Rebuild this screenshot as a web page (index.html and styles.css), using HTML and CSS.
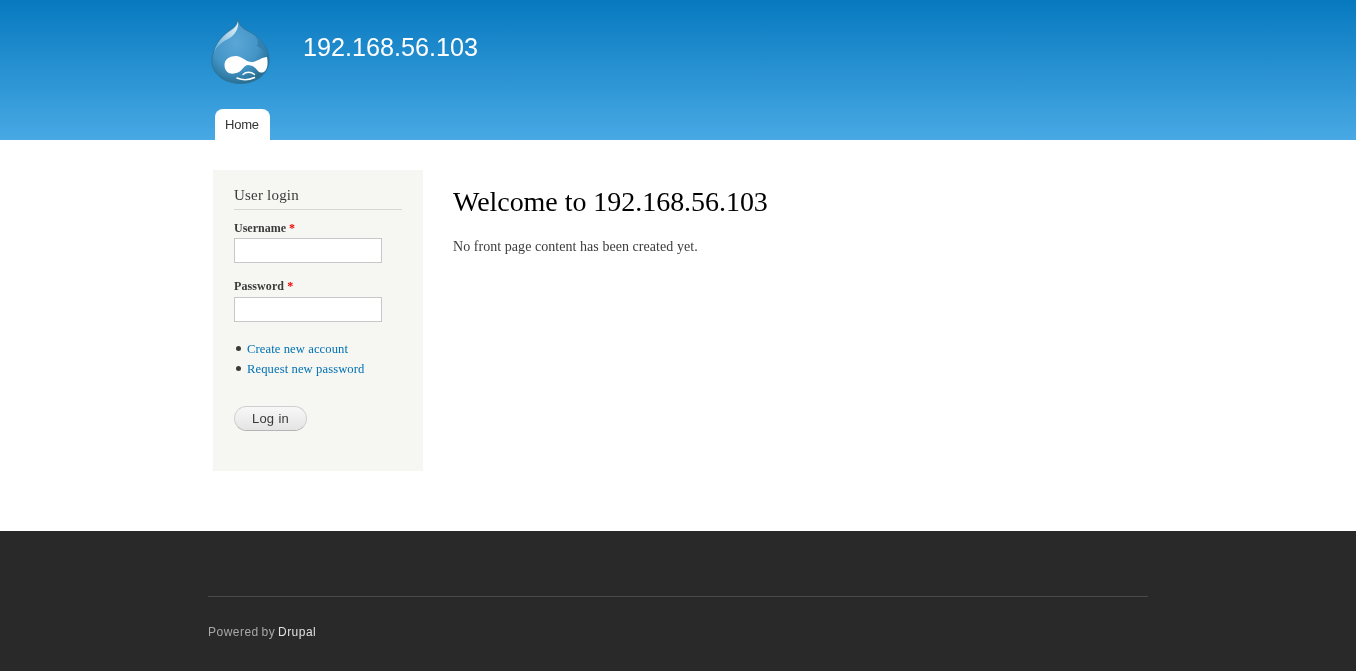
FILE: index.html
```html
<!DOCTYPE html>
<html lang="en">
<head>
<meta charset="utf-8">
<title>Welcome to 192.168.56.103</title>
<link rel="stylesheet" href="styles.css">
</head>
<body>
<header class="header">
  <div class="wrap header-top">
    <a class="logo" href="#" aria-label="Home">
      <svg width="62" height="68" viewBox="0 0 62 68">
        <defs>
          <radialGradient id="drop" cx="42%" cy="38%" r="62%">
            <stop offset="0" stop-color="#5ba7d6"/>
            <stop offset="0.65" stop-color="#4394c6"/>
            <stop offset="0.9" stop-color="#2f7ca6"/>
            <stop offset="1" stop-color="#2a6f8f"/>
          </radialGradient>
          <linearGradient id="shine" x1="1" y1="0" x2="0" y2="1">
            <stop offset="0" stop-color="#eef6fb"/>
            <stop offset="0.5" stop-color="#a9d0e8"/>
            <stop offset="1" stop-color="#5ba7d6"/>
          </linearGradient>
        </defs>
        <path d="M30 1C31 7 34 10 39 12.5C51 18 61 29 61 42C61 56 48 65.5 33 65.5C16 65.5 4 56 4 43C4 30 12 19 21 12.5C26 9 29 7 30 1Z" fill="url(#drop)" stroke="#2d7196" stroke-width="0.8"/>
        <path d="M30 3C29.5 7 27 10 21.5 13.5C14 18.5 8 26 6 34C10 27 15 23.5 20 21C27 17 31 11 30 3Z" fill="url(#shine)"/>
        <path d="M47 18.5C54 23 58.5 31 59.5 38C57 33.5 53.5 30 49 28C51 25 50 21.5 47 18.5Z" fill="#3280ae"/>
        <path d="M16.5 47C16.5 41 22 38 28 38C34 38 39 45 45 44C50 43 54 39 59 39C60 44 60 50 57 53C55 55 52 55 50 53C47 49 44 47 40 47C36 47 34 53 30 54.5C26 56 22 56 20 54.5C17.5 53 16.5 50 16.5 47Z" fill="#fff"/>
        <path d="M35 56.5C38 53.5 43 53.5 46.5 56.5" fill="none" stroke="#fff" stroke-width="1.3" stroke-linecap="round"/>
        <path d="M29 60C34 62 41 62 46.5 59.5" fill="none" stroke="#fff" stroke-width="1.5" stroke-linecap="round"/>
      </svg>
    </a>
    <a class="site-name" href="#">192.168.56.103</a>
  </div>
  <nav class="wrap tabs">
    <a class="tab" href="#">Home</a>
  </nav>
</header>

<div class="wrap main">
  <aside class="sidebar">
    <h2 class="block-title">User login</h2>
    <form class="login">
      <label class="field">
        <span class="label">Username <span class="req">*</span></span>
        <input class="input" type="text">
      </label>
      <label class="field">
        <span class="label">Password <span class="req">*</span></span>
        <input class="input" type="password">
      </label>
      <ul class="links">
        <li><a href="#">Create new account</a></li>
        <li><a href="#">Request new password</a></li>
      </ul>
      <button class="btn" type="button">Log in</button>
    </form>
  </aside>
  <main class="content">
    <h1 class="page-title">Welcome to 192.168.56.103</h1>
    <p class="intro">No front page content has been created yet.</p>
  </main>
</div>

<footer class="footer">
  <div class="wrap footer-inner">
    <span class="powered">Powered by <a href="#">Drupal</a></span>
  </div>
</footer>
</body>
</html>
```
FILE: styles.css
```css
* { box-sizing: border-box; }
html, body { margin: 0; padding: 0; }
body {
  font-family: "Liberation Serif", serif;
  font-size: 14px;
  line-height: 21px;
  color: #3b3b3b;
  background: #fff;
  height: 671px;
  overflow: hidden;
}
a { text-decoration: none; color: #0071b3; }
.wrap { width: 940px; margin: 0 auto; will-change: transform; }

.header {
  height: 140px;
  background: linear-gradient(to bottom, #0779bf 0%, #48a9e4 100%);
  font-family: "Liberation Sans", sans-serif;
  display: flex;
  flex-direction: column;
}
.header-top { display: flex; align-items: flex-start; height: 109px; }
.logo { display: block; margin: 18px 0 0; width: 62px; height: 68px; }
.logo svg { display: block; }
.site-name {
  margin: 30px 0 0 33px;
  font-size: 25.2px;
  line-height: 35px;
  color: #fffeff;
}
.tabs { display: flex; padding-left: 7px; }
.tab {
  display: block;
  width: 55px;
  height: 31px;
  padding-left: 10px;
  background: #fff;
  border-radius: 8px 8px 0 0;
  color: #333;
  font-size: 13px;
  line-height: 31px;
  letter-spacing: -0.2px;
}

.main { display: flex; align-items: flex-start; height: 391px; padding: 30px 0 0 5px; }
.sidebar {
  width: 210px;
  height: 301px;
  background: #f6f6f2;
  padding: 15px 21px 0 21px;
  flex: none;
}
.block-title {
  margin: 0;
  font-size: 15px;
  font-weight: 400;
  line-height: 20px;
  letter-spacing: 0.2px;
  color: #3b3b3b;
  height: 25px;
  border-bottom: 1px solid #d6d6d6;
}
.login { display: block; }
.field { display: block; }
.field + .field { margin-top: 13px; }
.field:first-child { padding-top: 8px; }
.label {
  display: block;
  font-size: 12px;
  font-weight: 700;
  line-height: 21px;
  height: 20px;
}
.field + .field .label { height: 21px; letter-spacing: 0.1px; }
.req { color: #e00; }
.input {
  display: block;
  width: 148px;
  height: 25px;
  border: 1px solid #c8c8c8;
  background: #fff;
  padding: 0;
  margin: 0;
}
.links {
  list-style: none;
  margin: 17px 0 0;
  padding: 0;
  font-size: 12.6px;
  line-height: 20px;
  letter-spacing: 0.1px;
}
.links li { position: relative; padding-left: 13px; }
.links li::before {
  content: "";
  position: absolute;
  left: 1.5px;
  top: 7px;
  width: 5px;
  height: 5px;
  border-radius: 50%;
  background: #3b3b3b;
}
.btn {
  display: block;
  margin-top: 27px;
  width: 73px;
  height: 25px;
  border: 1px solid #d0d0d0;
  border-bottom-color: #b4b4b4;
  border-radius: 13px;
  background: linear-gradient(to bottom, #f8f8f8, #e4e4e4);
  font-family: "Liberation Sans", sans-serif;
  font-size: 13px;
  letter-spacing: 0.15px;
  word-spacing: 0.5px;
  color: #3a3a3a;
  padding: 0;
}

.content { margin-left: 30px; }
.page-title {
  margin: 14px 0 0;
  font-size: 28px;
  font-weight: 400;
  line-height: 36px;
  letter-spacing: -0.04px;
  color: #000;
}
.intro { margin: 16px 0 0; font-size: 14px; line-height: 21px; letter-spacing: 0.05px; }

.footer {
  height: 140px;
  background: #292929;
  font-family: "Liberation Sans", sans-serif;
}
.footer-inner { padding-top: 65px; }
.powered {
  display: block;
  border-top: 1px solid #4a4a4a;
  padding-top: 26px;
  font-size: 12px;
  line-height: 18px;
  letter-spacing: 0.48px;
  word-spacing: -1px;
  color: #a8a8a8;
}
.powered a { color: #e0e0e0; }
```
